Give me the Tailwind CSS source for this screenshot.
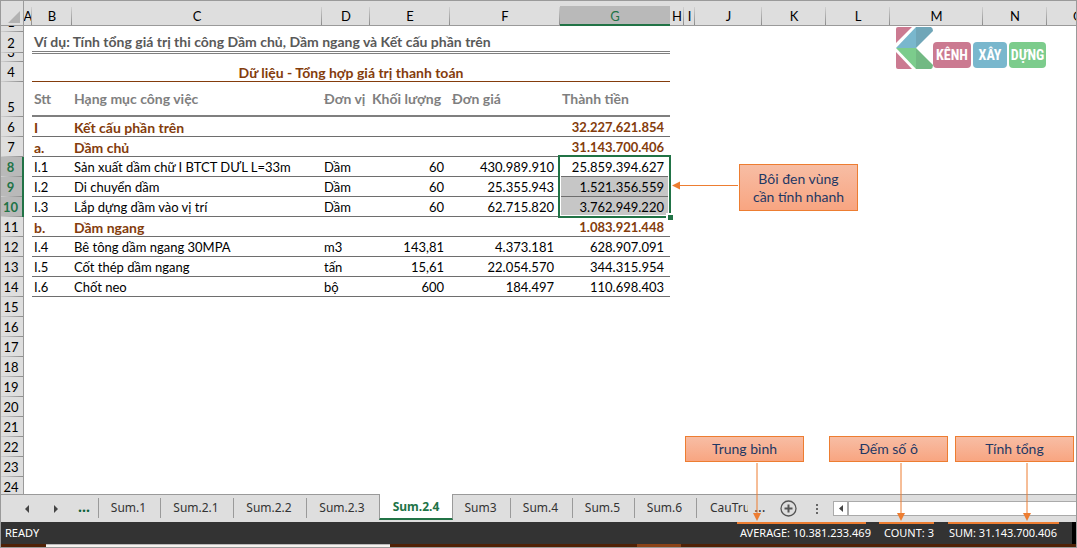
<!DOCTYPE html>
<html lang="vi">
<head>
<meta charset="utf-8">
<title>Sum.2.4</title>
<script src="https://cdn.jsdelivr.net/npm/@tailwindcss/browser@4"></script>
</head>
<body class="h-screen overflow-hidden bg-white">
<div class="relative flex h-full flex-col border border-[#9a9a9a] font-['Lato','Noto_Sans',sans-serif] text-[13px] leading-5 text-black">

  <main class="relative min-h-0 flex-1 overflow-hidden">
    <table class="w-full table-fixed border-separate border-spacing-0">
      <colgroup>
        <col class="w-[23px]"><col class="w-2"><col class="w-10"><col class="w-[250px]"><col class="w-12"><col class="w-20"><col class="w-[110px]"><col class="w-[110px]"><col class="w-[14px]"><col class="w-[11px]"><col class="w-[67px]"><col class="w-16"><col class="w-16"><col class="w-[93px]"><col class="w-16"><col>
      </colgroup>
      <thead><tr id="cols" class="h-[25px] bg-[#dedede]"></tr></thead>
      <tbody id="rows"></tbody>
    </table>

    <svg class="absolute top-[26px] left-[895px] h-[42px] w-[37px]" viewBox="0 0 37 42" aria-hidden="true">
      <path d="M2 0H16L0 16V2Q0 0 2 0Z" fill="#cb7a91"/>
      <path d="M20 0V21H0Z" fill="#79b7cd"/>
      <path d="M20 0H35Q37 1 37 4L20 21Z" fill="#70a6b8"/>
      <path d="M0 21H20V42Z" fill="#7ccc8c"/>
      <path d="M20 21L37 38Q37 41 35 42H20Z" fill="#72b983"/>
      <path d="M0 25L16 42H2Q0 42 0 40Z" fill="#cb7a91"/>
    </svg>
    <div class="absolute top-[41px] left-[932px] flex gap-0.5 font-['Liberation_Sans_Narrow','Roboto_Condensed','Roboto',sans-serif] text-sm font-bold text-white">
      <span class="flex h-[26px] w-[38px] items-center justify-center rounded bg-[#cb7a91]">KÊNH</span>
      <span class="flex h-[26px] w-[34px] items-center justify-center rounded bg-[#79b7cd]">XÂY</span>
      <span class="flex h-[26px] w-[37px] items-center justify-center rounded bg-[#7ccc8c]">DỰNG</span>
    </div>

    <div class="absolute top-[163px] left-[738px] flex h-[47px] w-[119px] items-center justify-center border border-[#ed7d31] bg-linear-to-b from-[#f7bda4] to-[#f8a581] text-center text-sm leading-[18px] text-[#1f3864]">Bôi đen vùng<br>cần tính nhanh</div>
    <svg class="absolute top-[180px] left-[671px] h-[9px] w-[67px]" viewBox="0 0 67 9" aria-hidden="true"><path d="M7 4.5H66" stroke="#ed7d31"/><path d="M0 4.500L8 .5V8.500Z" fill="#ed7d31"/></svg>
  </main>

  <nav class="flex h-7 shrink-0 border-t border-[#9a9a9a] bg-[#dedede] font-['Noto_Sans',sans-serif] text-xs text-[#333]" aria-label="Trang tính">
    <button class="ml-5 flex w-3 items-center justify-center" aria-label="Trước"><svg class="h-2 w-1" viewBox="0 0 4 8"><path d="M4 0V8L0 4Z" fill="#444"/></svg></button>
    <button class="ml-[17px] flex w-3 items-center justify-center" aria-label="Sau"><svg class="h-2 w-1" viewBox="0 0 4 8"><path d="M0 0V8L4 4Z" fill="#444"/></svg></button>
    <div class="flex h-[23px] w-9 items-center justify-center pl-2 text-sm font-bold text-[#0b6038]">...</div>
    <div id="tabs" class="flex"></div>
    <button class="flex h-[23px] w-5 items-center justify-center pl-1 text-sm">...</button>
    <button class="ml-2.5 flex w-5 items-center justify-center" aria-label="Thêm trang tính"><svg class="size-[17px]" viewBox="0 0 17 17"><circle cx="8.500" cy="8.500" r="7.500" fill="none" stroke="#555" stroke-width="1.300"/><path d="M4.500 8.500H12.500M8.500 4.500V12.500" stroke="#555" stroke-width="2"/></svg></button>
    <div class="ml-[18px] flex flex-col justify-center gap-0.5"><i class="size-0.5 bg-[#666]"></i><i class="size-0.5 bg-[#666]"></i><i class="size-0.5 bg-[#666]"></i></div>
    <div class="mt-1.5 ml-[15px] flex h-[15px] flex-1">
      <button class="flex w-[15px] items-center justify-center border border-[#aaa] bg-white" aria-label="Cuộn trái"><svg class="h-[7px] w-1" viewBox="0 0 4 7"><path d="M4 0V7L0 3.500Z" fill="#444"/></svg></button>
      <div class="flex-1 border-y border-l border-[#aaa] bg-white"></div>
    </div>
  </nav>

  <footer class="flex h-[22px] shrink-0 items-center bg-[#333] pl-1 font-['Noto_Sans',sans-serif] text-[11px] whitespace-nowrap text-white">
    <span class="flex-1">READY</span>
    <span class="w-[129px]">AVERAGE: 10.381.233.469</span>
    <span class="ml-[15px] w-[50px]">COUNT: 3</span>
    <span class="ml-[15px] w-[106px]">SUM: 31.143.700.406</span>
    <span class="ml-[17px] h-full w-1 bg-black"></span>
  </footer>
  <div class="flex h-[3px] shrink-0 bg-[#4f2106]"><i class="ml-[45px] w-[344px] border-t border-[#bbb] bg-[#f6f2ee]"></i><i class="ml-[247px] w-11 bg-[#8b4318]"></i></div>

  <div id="notes"></div>
</div>

<script>
const cols = ['A','B','C','D','E','F','G','H','I','J','K','L','M','N','O'];
const line = '<i class="absolute right-0 bottom-0 h-[18px] w-px bg-linear-to-b from-[#d0d0d0] to-[#8c8c8c]"></i>';
document.getElementById('cols').innerHTML =
  '<th class="border-r border-b border-[#9a9a9a] p-0"><svg class="mt-2 ml-[7px] size-3" viewBox="0 0 12 12"><path d="M12 0V12H0Z" fill="#b2b2b2"/></svg></th>' +
  cols.map(c => c === 'G'
    ? '<th scope="col" class="border-b-2 border-[#217346] p-0 align-bottom font-normal text-[#217346]"><div class="h-[18px] bg-[#b9b9b9] leading-5">G</div></th>'
    : c === 'O'
    ? '<th scope="col" class="overflow-hidden border-b border-[#9a9a9a] p-0 pt-[6px] pl-[26px] text-left leading-[18px] font-normal">O</th>'
    : `<th scope="col" class="relative border-b border-[#9a9a9a] p-0 pt-[6px] leading-[18px] font-normal whitespace-nowrap"><div class="flex justify-center overflow-hidden">${c}</div>${line}</th>`).join('');

const data = {
  6: ['I','Kết cấu phần trên','','','','32.227.621.854'],
  7: ['a.','Dầm chủ','','','','31.143.700.406'],
  8: ['I.1','Sản xuất dầm chữ I BTCT DƯL L=33m','Dầm','60','430.989.910','25.859.394.627'],
  9: ['I.2','Di chuyển dầm','Dầm','60','25.355.943','1.521.356.559'],
  10: ['I.3','Lắp dựng dầm vào vị trí','Dầm','60','62.715.820','3.762.949.220'],
  11: ['b.','Dầm ngang','','','','1.083.921.448'],
  12: ['I.4','Bê tông dầm ngang 30MPA','m3','143,81','4.373.181','628.907.091'],
  13: ['I.5','Cốt thép dầm ngang','tấn','15,61','22.054.570','344.315.954'],
  14: ['I.6','Chốt neo','bộ','600','184.497','110.698.403'],
};
const heights = {1:'h-1.5', 2:'h-[21px]', 3:'h-[9px]', 4:'h-5', 5:'h-[35px]'};
const rule = '<i class="absolute bottom-0 left-0 h-px w-full bg-linear-to-r from-[#d0d0d0] to-[#8c8c8c]"></i>';
const selection = '<i class="absolute -top-0.5 -left-0.5 z-10 h-[63px] w-[113px] border-2 border-[#217346] shadow-[inset_0_0_0_1px_#fff]"></i><i class="absolute top-14 -right-[3px] z-10 size-[7px] border-t-2 border-l-2 border-white bg-[#217346]"></i>';

function header(n) {
  const h = heights[n] || 'h-5';
  const sel = n >= 8 && n <= 10;
  return `<th scope="row" class="relative p-0 ${sel ? 'border-r-2 border-[#217346] bg-[#b9b9b9] font-bold text-[#217346]' : 'border-r border-[#9a9a9a] bg-[#dedede] font-normal'}"><div class="${h} flex items-end justify-center overflow-hidden pr-0.5 leading-[19px]">${n}</div>${rule}</th><td></td>`;
}
function cells(n) {
  if (n === 2) return '<td colspan="6" class="p-0 align-top"><div class="h-5 border-b border-[#7f7f7f] pl-0.5 text-sm leading-5 font-bold text-[#595959]">Ví dụ: Tính tổng giá trị thi công Dầm chủ, Dầm ngang và Kết cấu phần trên</div></td>';
  if (n === 3) return '<td colspan="6" class="border-t border-[#7f7f7f] p-0"></td>';
  if (n === 4) return '<td colspan="6" class="border-b border-[#843c0c] p-0 pt-0.5 text-center text-sm leading-[17px] font-bold text-[#843c0c]">Dữ liệu - Tổng hợp giá trị thanh toán</td>';
  if (n === 5) return ['Stt','Hạng mục công việc','Đơn vị','Khối lượng','Đơn giá','Thành tiền'].map(t => `<th scope="col" class="border-b-2 border-[#7f7f7f] p-0 pl-0.5 text-left text-sm font-bold whitespace-nowrap text-[#7f7f7f]">${t}</th>`).join('');
  const r = data[n];
  if (!r) return '<td colspan="6" class="p-0"></td>';
  const section = [6,7,11].includes(n);
  return r.map((t, i) => {
    const side = i < 3 ? 'pl-0.5 text-left' : 'pr-1.5 text-right';
    const tone = section ? (i < 3 ? 'text-sm font-bold text-[#843c0c]' : 'text-[13px] font-bold text-[#843c0c]') : 'text-[13px]';
    const fill = i === 5 && (n === 9 || n === 10) ? 'bg-[#c6c6c6] bg-clip-padding' : '';
    return `<td class="relative border-b border-[#6e6e6e] p-0 pt-0.5 whitespace-nowrap ${side} ${tone} leading-[17px] ${fill}">${t}${i === 5 && n === 8 ? selection : ''}</td>`;
  }).join('');
}
let html = '';
for (let n = 1; n <= 24; n++) html += `<tr class="${heights[n] || 'h-5'}">${header(n)}${cells(n)}</tr>`;
document.getElementById('rows').innerHTML = html;

const tabs = [['Sum.1','w-[62px]'],['Sum.2.1','w-[73px]'],['Sum.2.2','w-[73px]'],['Sum.2.3','w-[73px]'],['Sum.2.4','w-[74px]'],['Sum3','w-[57px]'],['Sum.4','w-[62px]'],['Sum.5','w-[62px]'],['Sum.6','w-[62px]'],['CauTru','w-[52px]']];
document.getElementById('tabs').innerHTML = tabs.map(([t, w]) => t === 'Sum.2.4'
  ? `<button class="${w} -mt-px h-[26px] border-x border-b-2 border-x-[#9a9a9a] border-b-[#217346] bg-white pt-0.5 font-bold text-[#217346]" aria-current="page">${t}</button>`
  : t === 'CauTru'
  ? `<button class="${w} mt-[3px] h-5 overflow-hidden border-l border-[#9a9a9a] pl-[13px] text-left">${t}</button>`
  : `<button class="${w} mt-[3px] h-5 pr-0.5 ${t === 'Sum3' ? '' : 'border-l border-[#9a9a9a]'}">${t}</button>`).join('');

const notes = [
  ['Trung bình','left-[684px]','left-[752px]','left-[736px] w-[129px]'],
  ['Đếm số ô','left-[828px]','left-[896px]','left-[878px] w-[55px]'],
  ['Tính tổng','left-[954px]','left-[1022px]','left-[947px] w-[111px]'],
];
document.getElementById('notes').innerHTML = notes.map(([t, box, arrow, mark]) =>
  `<div class="absolute bottom-[85px] ${box} flex h-[26px] w-[119px] items-center justify-center border border-[#ed7d31] bg-linear-to-b from-[#f7bda4] to-[#f8a581] text-sm text-[#1f3864]">${t}</div>
   <svg class="absolute bottom-[25px] ${arrow} h-[59px] w-2" viewBox="0 0 8 59" aria-hidden="true"><path d="M4 0V52" stroke="#ed7d31"/><path d="M0 50H8L4 58Z" fill="#ed7d31"/></svg>
   <i class="absolute bottom-[23px] ${mark} h-0.5 bg-[#ed7d31]"></i>`).join('');
</script>
</body>
</html>
